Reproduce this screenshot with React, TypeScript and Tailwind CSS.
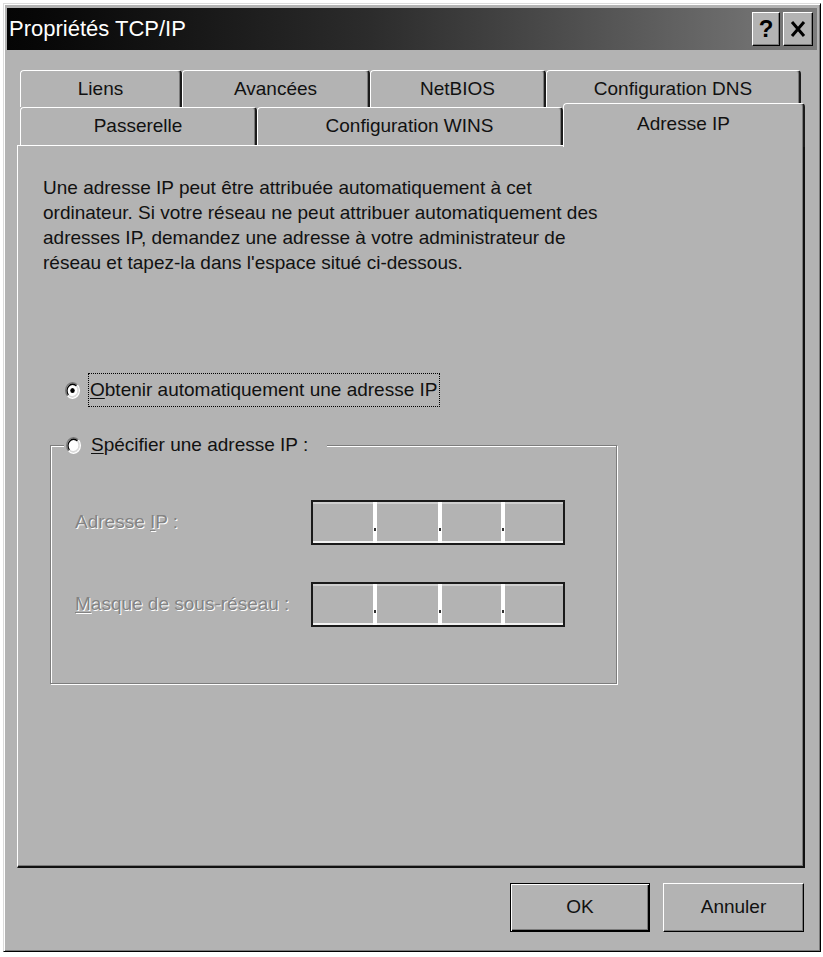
import React from 'react';

const font = "font-['Liberation_Sans',Arial,sans-serif]";

// onglet non sélectionné
const Tab = ({ label, width }: { label: string; width: string }) => (
	<div
		className={`${width} flex h-full items-center justify-center whitespace-nowrap rounded-t-[4px] border-t border-l border-r-2 border-t-white border-l-white border-r-[#1c1c1c] text-[19px] text-[#111] shadow-[inset_-1px_0_0_#7a7a7a]`}
	>
		{label}
	</div>
);

const Radio = ({ checked }: { checked?: boolean }) => (
	<svg width="15" height="17" viewBox="0 0 12 12" preserveAspectRatio="none" className="shrink-0">
		<circle cx="6" cy="6" r="5" fill="#fff" />
		<path d="M2.11 9.89 A5.5 5.5 0 0 1 9.89 2.11" fill="none" stroke="#7a7a7a" strokeWidth="1" />
		<path d="M2.82 9.18 A4.5 4.5 0 0 1 9.18 2.82" fill="none" stroke="#000" strokeWidth="1" />
		<path d="M9.89 2.11 A5.5 5.5 0 0 1 2.11 9.89" fill="none" stroke="#fff" strokeWidth="1" />
		<path d="M9.18 2.82 A4.5 4.5 0 0 1 2.82 9.18" fill="none" stroke="#d8d8d8" strokeWidth="1" />
		{checked && <circle cx="6" cy="6" r="1.8" fill="#000" />}
	</svg>
);

const Sep = () => (
	<div className="flex w-[4px] items-end justify-center bg-white pb-[12px]">
		<div className="h-[3px] w-[2px] bg-[#333]" />
	</div>
);

const IpField = () => (
	<div className="flex h-[45px] w-[254px] shrink-0 border-2 border-[#1a1a1a] shadow-[inset_0_2px_0_#cfcfcf,inset_0_-2px_0_#f2f2f2]">
		<div className="w-[60px]" />
		<Sep />
		<div className="w-[61px]" />
		<Sep />
		<div className="w-[59px]" />
		<Sep />
		<div className="flex-1" />
	</div>
);

const DisabledLabel = ({ children }: { children: React.ReactNode }) => (
	<div className="w-[236px] shrink-0 whitespace-nowrap text-[19px] text-[#838383] [text-shadow:1px_1px_0_#fff]">
		{children}
	</div>
);

export default function App() {
	return (
		<div className={`min-h-screen bg-white pl-[3px] pt-[3px] ${font}`}>
			<div className="flex h-[949px] w-[818px] flex-col border border-t-[#dcdcdc] border-l-[#dcdcdc] border-r-black border-b-black bg-[#b3b3b3] p-[3px] shadow-[inset_1px_1px_0_#fff,inset_-1px_-1px_0_#7a7a7a]">
				{/* barre de titre */}
				<div className="mt-[1px] flex h-[42px] items-center justify-between bg-linear-to-r from-[#050505] via-[#2c2c2c] via-45% to-[#7c7c7c] pl-[2px] pr-[4px]">
					<span className="text-[22px] leading-none text-white">Propriétés TCP/IP</span>
					<div className="flex gap-[3px]">
						<button className="flex h-[34px] w-[28px] items-center justify-center border border-t-white border-l-white border-r-black border-b-black bg-[#b3b3b3] text-[24px] leading-none font-bold text-black shadow-[inset_-1px_-1px_0_#7a7a7a]">
							?
						</button>
						<button className="flex h-[34px] w-[30px] items-center justify-center border border-t-white border-l-white border-r-black border-b-black bg-[#b3b3b3] shadow-[inset_-1px_-1px_0_#7a7a7a]">
							<svg width="16" height="18" viewBox="0 0 16 18">
								<path d="M2 2 L14 16 M14 2 L2 16" stroke="#000" strokeWidth="3" />
							</svg>
						</button>
					</div>
				</div>

				{/* onglets */}
				<div className="ml-[10px] mt-[20px] w-[788px]">
					<div className="flex h-[37px] pl-[3px]">
						<Tab label="Liens" width="w-[162px]" />
						<Tab label="Avancées" width="w-[188px]" />
						<Tab label="NetBIOS" width="w-[176px]" />
						<Tab label="Configuration DNS" width="w-[255px]" />
					</div>
					<div className="flex h-[38px] pl-[3px]">
						<Tab label="Passerelle" width="w-[237px]" />
						<Tab label="Configuration WINS" width="w-[306px]" />
						<div className="relative z-10 -mt-[4px] flex h-[44px] w-[242px] justify-center rounded-t-[4px] border-t border-l border-r-2 border-t-white border-l-white border-r-[#1c1c1c] bg-[#b3b3b3] pt-[7px] text-[19px] leading-[25px] text-[#111] shadow-[inset_-1px_0_0_#7a7a7a]">
							Adresse IP
						</div>
					</div>

					{/* panneau */}
					<div className="h-[723px] border-t border-l border-r-2 border-b-2 border-t-white border-l-white border-r-[#111] border-b-[#111] pl-[25px] pt-[29px] shadow-[inset_-1px_-1px_0_#7a7a7a]">
						<p className="text-[19px] leading-[25px] text-[#111]">
							Une adresse IP peut être attribuée automatiquement à cet
							<br />
							ordinateur. Si votre réseau ne peut attribuer automatiquement des
							<br />
							adresses IP, demandez une adresse à votre administrateur de
							<br />
							réseau et tapez-la dans l'espace situé ci-dessous.
						</p>

						<div className="ml-[22px] mt-[98px] flex h-[34px] items-center gap-[8px]">
							<Radio checked />
							<div className="flex h-[34px] items-center whitespace-nowrap border border-dotted border-black px-[1px] text-[19px] text-[#111]">
								<span>
									<span className="underline underline-offset-2">O</span>btenir automatiquement une adresse IP
								</span>
							</div>
						</div>

						<fieldset className="ml-[7px] mt-[25px] h-[252px] w-[567px] border border-[#7d7d7d] shadow-[1px_1px_0_#fff,inset_1px_1px_0_#fff]">
							<legend className="ml-[13px] flex h-[26px] w-[263px] items-center gap-[10px] whitespace-nowrap bg-[#b3b3b3] pl-[2px] text-[19px] text-[#111]">
								<Radio />
								<span>
									<span className="underline underline-offset-2">S</span>pécifier une adresse IP :
								</span>
							</legend>

							<div className="ml-[24px] mt-[42px] flex items-center">
								<DisabledLabel>
									Adresse <span className="underline underline-offset-2">I</span>P :
								</DisabledLabel>
								<IpField />
							</div>
							<div className="ml-[24px] mt-[37px] flex items-center">
								<DisabledLabel>
									<span className="underline underline-offset-2">M</span>asque de sous-réseau :
								</DisabledLabel>
								<IpField />
							</div>
						</fieldset>
					</div>
				</div>

				{/* boutons */}
				<div className="mt-[15px] flex justify-end gap-[13px] pr-[13px]">
					<button className="h-[49px] w-[140px] border border-black text-[19px] text-[#111] shadow-[inset_1px_1px_0_#fff,inset_-1px_-1px_0_#000,inset_-2px_-2px_0_#7a7a7a]">
						OK
					</button>
					<button className="h-[49px] w-[141px] border border-t-white border-l-white border-r-black border-b-black text-[19px] text-[#111] shadow-[inset_-1px_-1px_0_#7a7a7a]">
						Annuler
					</button>
				</div>
			</div>
		</div>
	);
}
